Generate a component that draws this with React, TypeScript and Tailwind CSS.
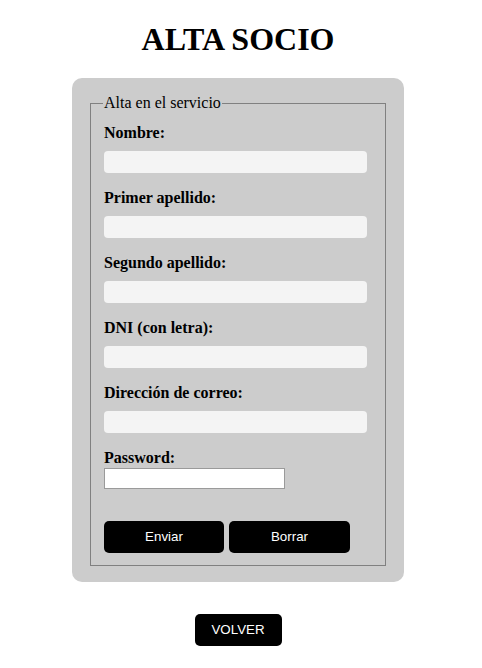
import React from "react";

const fields = [
  "Nombre:",
  "Primer apellido:",
  "Segundo apellido:",
  "DNI (con letra):",
  "Dirección de correo:",
];

export default function App() {
  return (
    <div className="w-[476px] flex flex-col items-center bg-white min-h-[668px]" style={{ fontFamily: '"Liberation Serif", serif' }}>
      <h1 className="mt-[21px] text-[32px] font-bold leading-[37px] text-black" style={{ fontFamily: '"Liberation Serif", serif' }}>
        ALTA SOCIO
      </h1>
      <div className="mt-[20px] w-[332px] bg-[#cccccc] rounded-[10px] px-[16px] pt-[16px] pb-[16px]">
        <fieldset className="mx-[2px] border border-[#808080] px-[13px] pb-[12px]">
          <legend className="text-[16px] leading-[18px] px-[1px] text-black -ml-[1px]">Alta en el servicio</legend>
          <div className="flex flex-col pt-[12px]">
            {fields.map((f) => (
              <div key={f} className="flex flex-col">
                <label className="text-[16px] font-bold leading-[18px] text-black">{f}</label>
                <input className="mt-[9px] mb-[16px] w-[263px] h-[22px] bg-[#f4f4f4] rounded-[4px] border-0 outline-none" />
              </div>
            ))}
            <label className="text-[16px] font-bold leading-[18px] text-black">Password:</label>
            <input type="password" className="w-[181px] h-[21px] bg-white border border-[#9a9a9a] mt-[1px]" />
            <div className="flex gap-[5px] mt-[32px]">
              <button className="w-[120px] h-[32px] bg-black text-white rounded-[5px] text-[13.33px]" style={{ fontFamily: '"Liberation Sans", Arial, sans-serif' }}>
                Enviar
              </button>
              <button className="w-[121px] h-[32px] bg-black text-white rounded-[5px] text-[13.33px]" style={{ fontFamily: '"Liberation Sans", Arial, sans-serif' }}>
                Borrar
              </button>
            </div>
          </div>
        </fieldset>
      </div>
      <button className="mt-[32px] w-[87px] h-[32px] bg-black text-white rounded-[5px] text-[13.33px]" style={{ fontFamily: '"Liberation Sans", Arial, sans-serif' }}>
        VOLVER
      </button>
    </div>
  );
}
